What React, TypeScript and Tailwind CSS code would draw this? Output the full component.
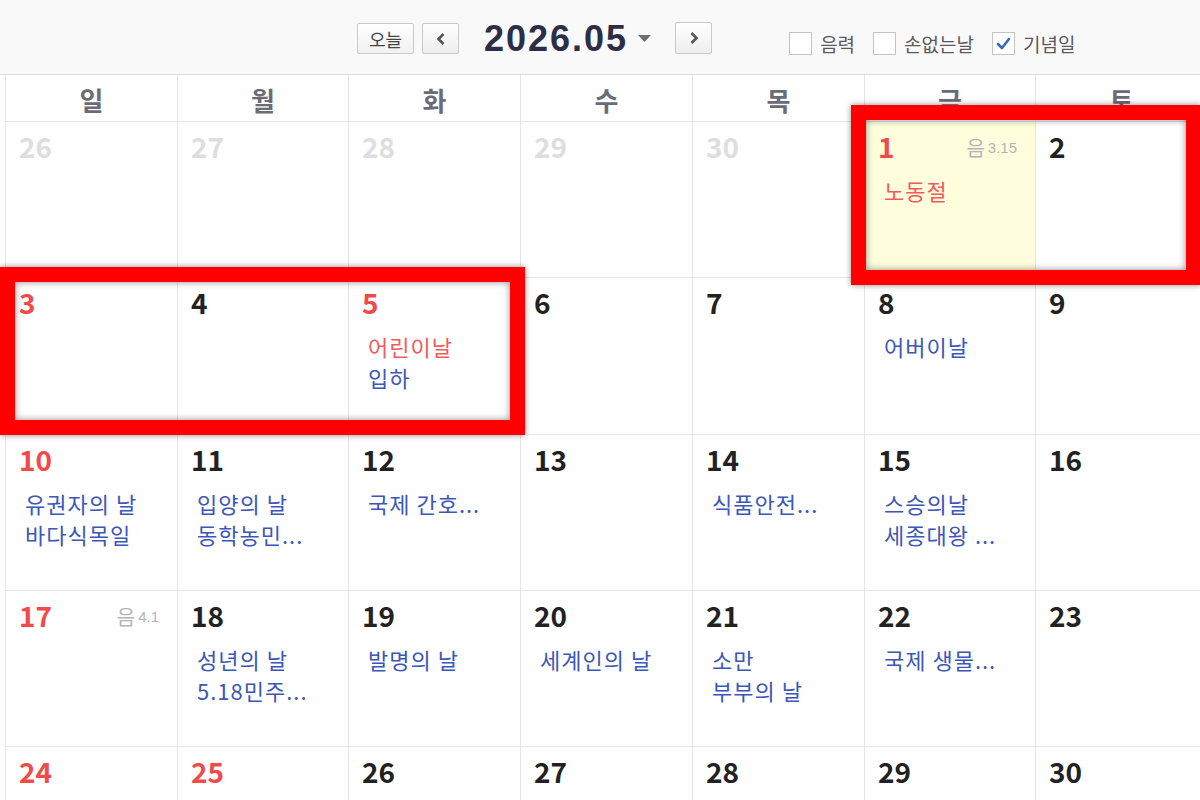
import React from "react";

type Ev = { t: string; red?: boolean };
type Day = { d: number; c: "gray" | "red" | "dark"; ev?: Ev[]; lunar?: [string, string]; bg?: boolean };

const weeks: Day[][] = [
  [
    { d: 26, c: "gray" },
    { d: 27, c: "gray" },
    { d: 28, c: "gray" },
    { d: 29, c: "gray" },
    { d: 30, c: "gray" },
    { d: 1, c: "red", ev: [{ t: "노동절", red: true }], lunar: ["음", "3.15"], bg: true },
    { d: 2, c: "dark" },
  ],
  [
    { d: 3, c: "red" },
    { d: 4, c: "dark" },
    { d: 5, c: "red", ev: [{ t: "어린이날", red: true }, { t: "입하" }] },
    { d: 6, c: "dark" },
    { d: 7, c: "dark" },
    { d: 8, c: "dark", ev: [{ t: "어버이날" }] },
    { d: 9, c: "dark" },
  ],
  [
    { d: 10, c: "red", ev: [{ t: "유권자의 날" }, { t: "바다식목일" }] },
    { d: 11, c: "dark", ev: [{ t: "입양의 날" }, { t: "동학농민..." }] },
    { d: 12, c: "dark", ev: [{ t: "국제 간호..." }] },
    { d: 13, c: "dark" },
    { d: 14, c: "dark", ev: [{ t: "식품안전..." }] },
    { d: 15, c: "dark", ev: [{ t: "스승의날" }, { t: "세종대왕 ..." }] },
    { d: 16, c: "dark" },
  ],
  [
    { d: 17, c: "red", lunar: ["음", "4.1"] },
    { d: 18, c: "dark", ev: [{ t: "성년의 날" }, { t: "5.18민주..." }] },
    { d: 19, c: "dark", ev: [{ t: "발명의 날" }] },
    { d: 20, c: "dark", ev: [{ t: "세계인의 날" }] },
    { d: 21, c: "dark", ev: [{ t: "소만" }, { t: "부부의 날" }] },
    { d: 22, c: "dark", ev: [{ t: "국제 생물..." }] },
    { d: 23, c: "dark" },
  ],
  [
    { d: 24, c: "red" },
    { d: 25, c: "red" },
    { d: 26, c: "dark" },
    { d: 27, c: "dark" },
    { d: 28, c: "dark" },
    { d: 29, c: "dark" },
    { d: 30, c: "dark" },
  ],
];

const weekdays = ["일", "월", "화", "수", "목", "금", "토"];
const rowH = ["h-[156px]", "h-[157px]", "h-[156px]", "h-[156px]", "h-[156px]"];

function Cell({ day }: { day: Day }) {
  const numColor =
    day.c === "gray" ? "text-[#dedede]" : day.c === "red" ? "text-[#f24a4a]" : "text-[#222222]";
  return (
    <div
      className={`border-r border-b border-[#e6e6e6] pl-[13px] pr-[18px] pt-[10px] ${
        day.bg ? "bg-[#fefedd]" : "bg-white"
      }`}
    >
      <div className="flex items-center justify-between">
        <span className={`text-[28px] leading-none font-bold ${numColor}`}>{day.d}</span>
        {day.lunar && (
          <span className="flex items-center text-[#b4b4b4] leading-none mt-[3px]">
            <span className="text-[20px]">{day.lunar[0]}</span>
            <span className="text-[15px] ml-[3px] font-[Liberation_Sans]">{day.lunar[1]}</span>
          </span>
        )}
      </div>
      {day.ev && (
        <div className="mt-[15px] ml-[6px]">
          {day.ev.map((e, i) => (
            <div
              key={i}
              className={`text-[22px] leading-[31px] tracking-[1px] whitespace-nowrap ${
                e.red ? "text-[#f25a5e]" : "text-[#3c57b8]"
              }`}
            >
              {e.t}
            </div>
          ))}
        </div>
      )}
    </div>
  );
}

function Checkbox({ label, checked }: { label: string; checked?: boolean }) {
  return (
    <div className="flex items-center">
      <div className="w-[23px] h-[23px] border border-[#c4c4c4] bg-white flex items-center justify-center">
        {checked && (
          <svg width="15" height="13" viewBox="0 0 15 13">
            <path d="M2 7 L6 11 L13 2" fill="none" stroke="#3a68c0" strokeWidth="2.6" strokeLinecap="round" strokeLinejoin="round" />
          </svg>
        )}
      </div>
      <span className="ml-[8px] text-[19px] text-[#5a5a5a] leading-none">{label}</span>
    </div>
  );
}

export default function App() {
  return (
    <div
      className="relative w-[1200px] h-[800px] overflow-hidden bg-white"
      style={{ fontFamily: '"Noto Sans CJK KR", "Noto Sans", sans-serif' }}
    >
      {/* header */}
      <div className="h-[75px] bg-[#f9f9fa] border-b border-[#dcdcdc] flex items-start pl-[357px]">
        <div className="mt-[23px] w-[57px] h-[31px] border border-[#c9c9c9] rounded-[2px] bg-gradient-to-b from-white to-[#f1f1f1] flex items-center justify-center text-[18px] text-[#444] leading-none">
          오늘
        </div>
        <div className="mt-[23px] ml-[8px] w-[37px] h-[31px] border border-[#c9c9c9] rounded-[2px] bg-gradient-to-b from-white to-[#eeeeee] flex items-center justify-center">
          <svg width="10" height="14" viewBox="0 0 10 14">
            <path d="M7.5 2 L2.5 7 L7.5 12" fill="none" stroke="#555" strokeWidth="2.6" />
          </svg>
        </div>
        <div
          className="mt-[21px] ml-[25px] text-[36px] leading-[36px] font-bold text-[#2c2e48] tracking-[2px]"
          style={{ fontFamily: '"Liberation Sans", Arial, sans-serif' }}
        >
          2026.05
        </div>
        <svg className="mt-[35px] ml-[10px]" width="13" height="7" viewBox="0 0 13 7">
          <path d="M0 0 L13 0 L6.5 7 Z" fill="#6f6f6f" />
        </svg>
        <div className="mt-[22px] ml-[24px] w-[37px] h-[32px] border border-[#c9c9c9] rounded-[2px] bg-gradient-to-b from-white to-[#eeeeee] flex items-center justify-center">
          <svg width="10" height="14" viewBox="0 0 10 14">
            <path d="M2.5 2 L7.5 7 L2.5 12" fill="none" stroke="#555" strokeWidth="2.6" />
          </svg>
        </div>
        <div className="mt-[32px] ml-[77px] flex items-center gap-[18px]">
          <Checkbox label="음력" />
          <Checkbox label="손없는날" />
          <Checkbox label="기념일" checked />
        </div>
      </div>

      {/* grid */}
      <div className="ml-[5px] border-l border-[#e6e6e6] w-[1210px]">
        <div className="grid grid-cols-[172px_171px_172px_172px_172px_171px_172px] h-[47px]">
          {weekdays.map((w) => (
            <div
              key={w}
              className="border-r border-b border-[#e6e6e6] flex items-center justify-center pt-[4px] text-[26px] font-semibold text-[#6a6b76] leading-none"
            >
              {w}
            </div>
          ))}
        </div>
        {weeks.map((wk, i) => (
          <div key={i} className={`grid grid-cols-[172px_171px_172px_172px_172px_171px_172px] ${rowH[i]}`}>
            {wk.map((d, j) => (
              <Cell key={j} day={d} />
            ))}
          </div>
        ))}
      </div>

      {/* highlight boxes */}
      <div className="absolute left-[851px] top-[105px] w-[350px] h-[180px] border-[15px] border-[#ff0000] shadow-[0_0_6px_rgba(0,0,0,0.45),inset_0_0_7px_rgba(0,0,0,0.45)]" />
      <div className="absolute left-0 top-[267px] w-[525px] h-[168px] border-[15px] border-[#ff0000] shadow-[0_0_6px_rgba(0,0,0,0.45),inset_0_0_7px_rgba(0,0,0,0.45)]" />
    </div>
  );
}
